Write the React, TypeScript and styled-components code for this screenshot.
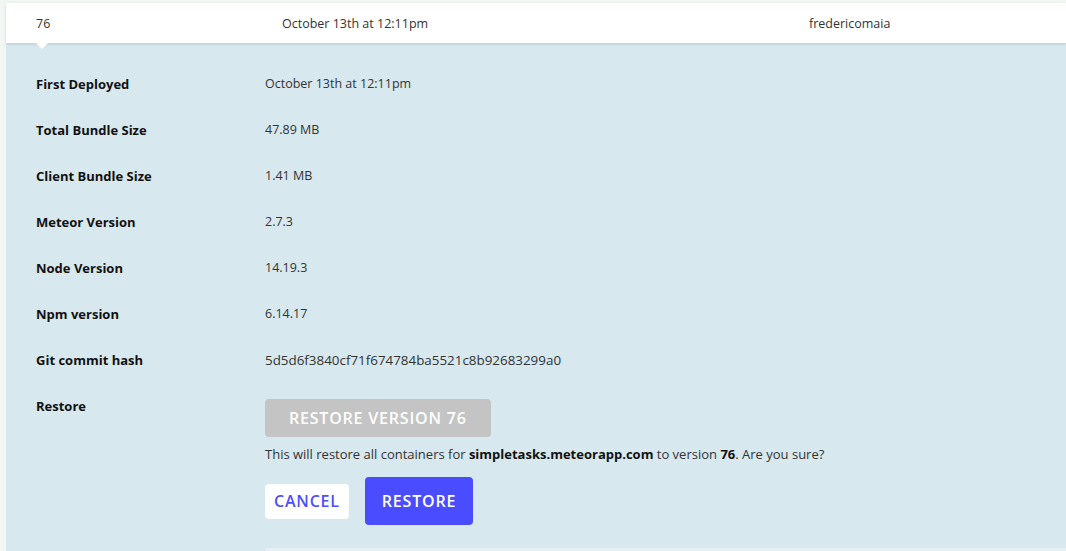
import React from "react";
import styled, { createGlobalStyle } from "styled-components";

const Global = createGlobalStyle`
  html, body { margin: 0; padding: 0; background: #f3f7f4; }
  body { font-family: "Open Sans", "Noto Sans", sans-serif; color: #222; }
`;

const Page = styled.div`
  padding: 3px 0 0 6px;
  width: 1066px;
  height: 551px;
  box-sizing: border-box;
  overflow: hidden;
`;

const Card = styled.div`
  background: #d8e8ef;
  display: flex;
  flex-direction: column;
`;

const HeaderRow = styled.div`
  position: relative;
  height: 40px;
  background: #fff;
  display: grid;
  grid-template-columns: 246px 527px 1fr;
  align-items: center;
  padding-left: 30px;
  font-size: 12.5px;
  color: #333;
  box-shadow: 0 1px 3px rgba(0, 0, 0, 0.14);
  z-index: 1;
`;

const Caret = styled.span`
  position: absolute;
  left: 30px;
  bottom: -6px;
  width: 0;
  height: 0;
  border-left: 6px solid transparent;
  border-right: 6px solid transparent;
  border-top: 6px solid #fff;
`;

const Details = styled.div`
  padding: 30px 0 0 30px;
  display: flex;
  flex-direction: column;
`;

const Row = styled.div`
  display: grid;
  grid-template-columns: 229px 1fr;
  min-height: 46px;
  font-size: 12.5px;
  line-height: 22px;
`;

const Label = styled.div`
  font-weight: 700;
  font-size: 13px;
  color: #111;
`;

const Value = styled.div<{ $wide?: boolean }>`
  color: #333;
  font-size: ${({ $wide }) => ($wide ? "13.4px" : "12.5px")};
`;

const RestoreBlock = styled.div`
  display: flex;
  flex-direction: column;
  align-items: flex-start;
`;

const Button = styled.button<{ $variant: "disabled" | "ghost" | "primary" }>`
  font-family: "Open Sans", sans-serif;
  font-weight: 600;
  font-size: 16px;
  letter-spacing: 0.8px;
  text-transform: uppercase;
  border: none;
  border-radius: 4px;
  cursor: pointer;
  ${({ $variant }) =>
    $variant === "disabled"
      ? `background:#c4c4c4;color:#fff;height:38px;padding:0 24px;margin-top:4px;cursor:default;`
      : $variant === "ghost"
      ? `background:#fff;color:#4d4fff;height:35px;padding:0 9px;`
      : `background:#4a4cff;color:#fff;height:48px;padding:0 17px;`}
`;

const Notice = styled.p`
  margin: 6px 0 0;
  font-size: 13px;
  line-height: 22px;
  color: #333;
  b { color: #111; font-weight: 700; }
`;

const Actions = styled.div`
  display: flex;
  align-items: center;
  gap: 16px;
  margin-top: 12px;
`;

const Divider = styled.div`
  align-self: stretch;
  height: 3px;
  margin-top: 23px;
  background: #e6eff3;
`;

const rows: [string, string][] = [
  ["First Deployed", "October 13th at 12:11pm"],
  ["Total Bundle Size", "47.89 MB"],
  ["Client Bundle Size", "1.41 MB"],
  ["Meteor Version", "2.7.3"],
  ["Node Version", "14.19.3"],
  ["Npm version", "6.14.17"],
  ["Git commit hash", "5d5d6f3840cf71f674784ba5521c8b92683299a0"],
];

export default function App() {
  return (
    <>
      <Global />
      <Page>
        <Card>
          <HeaderRow>
            <span>76</span>
            <span>October 13th at 12:11pm</span>
            <span>fredericomaia</span>
            <Caret />
          </HeaderRow>
          <Details>
            {rows.map(([l, v]) => (
              <Row key={l}>
                <Label>{l}</Label>
                <Value $wide={l === "Git commit hash"}>{v}</Value>
              </Row>
            ))}
            <Row>
              <Label>Restore</Label>
              <RestoreBlock>
                <Button $variant="disabled" disabled>Restore version 76</Button>
                <Notice>
                  This will restore all containers for <b>simpletasks.meteorapp.com</b> to version <b>76</b>. Are you sure?
                </Notice>
                <Actions>
                  <Button $variant="ghost">Cancel</Button>
                  <Button $variant="primary">Restore</Button>
                </Actions>
                <Divider />
              </RestoreBlock>
            </Row>
          </Details>
        </Card>
      </Page>
    </>
  );
}
